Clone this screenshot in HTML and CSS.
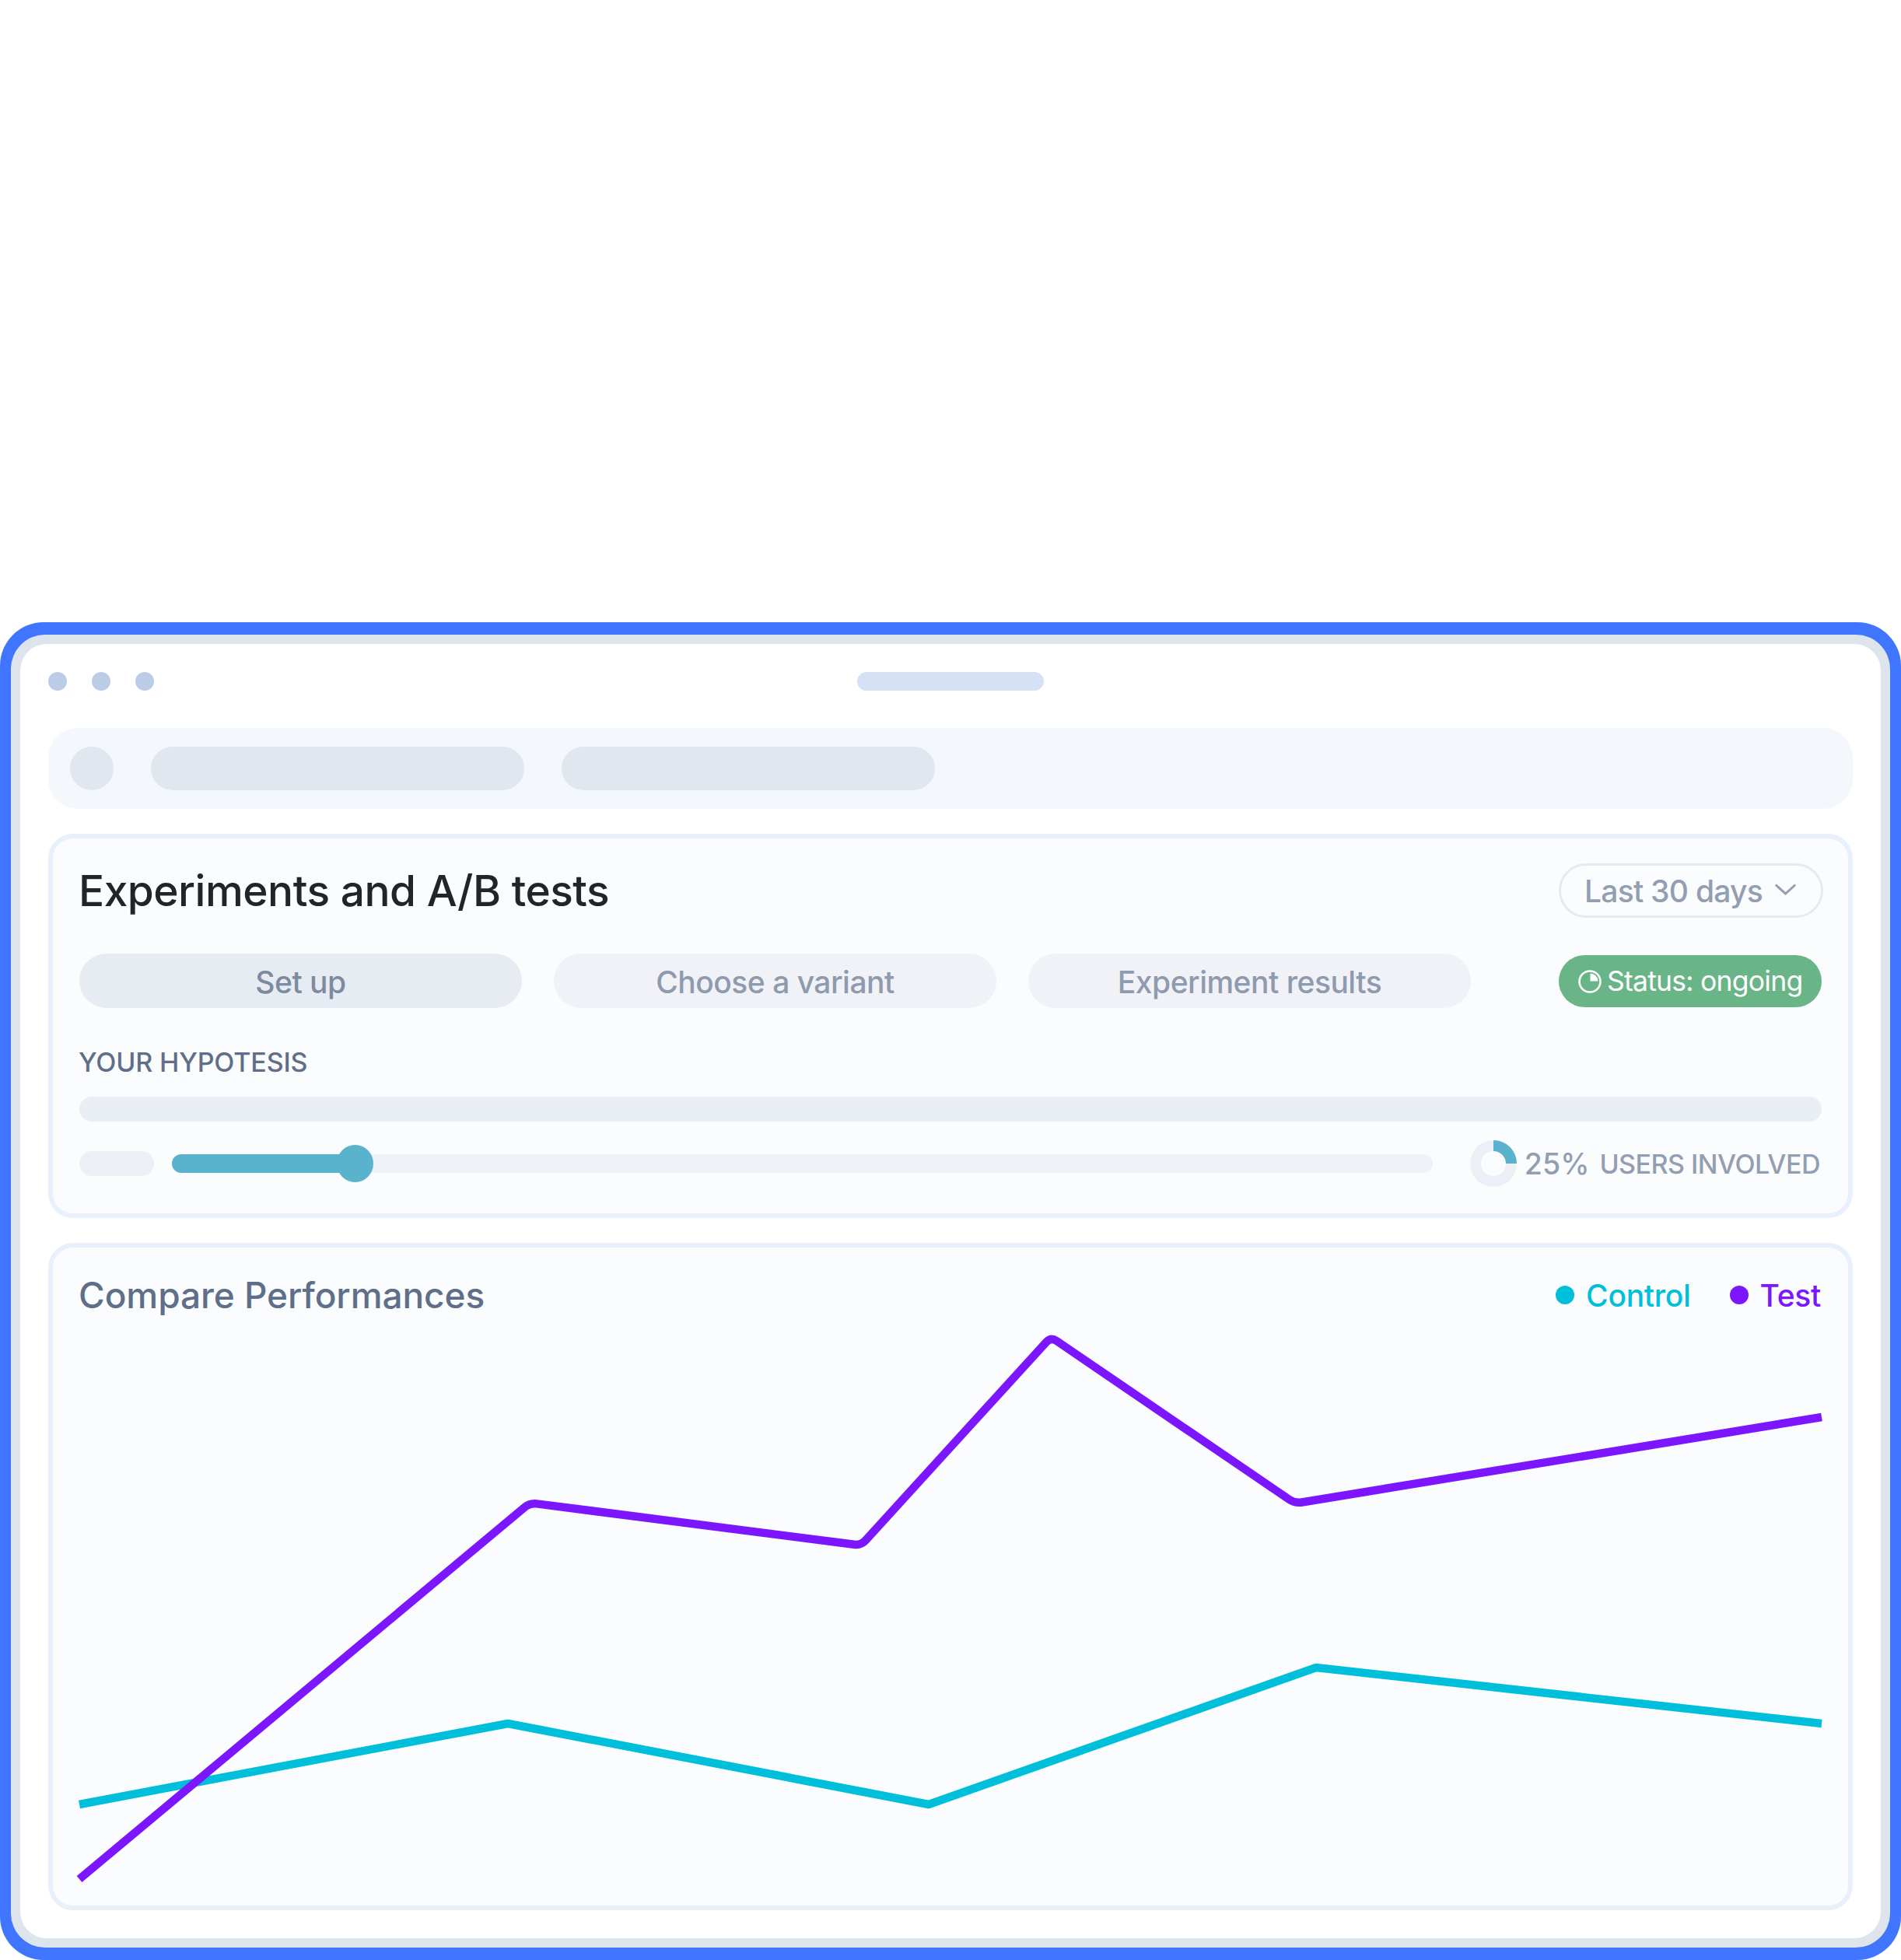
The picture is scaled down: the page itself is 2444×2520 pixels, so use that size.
FILE: index.html
```html
<!DOCTYPE html>
<html lang="en">
<head>
<meta charset="utf-8">
<title>Experiments and A/B tests</title>
<link rel="stylesheet" href="styles.css">
</head>
<body>
<div class="frame">
  <div class="frame-inner">
    <div class="window">
      <div class="titlebar">
        <div class="dots"><span class="dot"></span><span class="dot"></span><span class="dot"></span></div>
        <span class="address"></span>
      </div>
      <div class="nav">
        <span class="nav-circle"></span>
        <span class="nav-pill"></span>
        <span class="nav-pill"></span>
      </div>
      <section class="card card-experiment">
        <div class="head">
          <h1 class="title">Experiments and A/B tests</h1>
          <div class="range">
            <span>Last 30 days</span>
            <svg class="chevron" viewBox="0 0 27 15" width="27" height="15"><polyline points="0.8,1.5 13.5,13 26.2,1.5"/></svg>
          </div>
        </div>
        <div class="tabs">
          <div class="tab tab-active">Set up</div>
          <div class="tab">Choose a variant</div>
          <div class="tab">Experiment results</div>
          <div class="status">
            <svg class="status-icon" viewBox="0 0 30 30" width="30" height="30"><circle cx="15" cy="15" r="13.5" class="status-ring"/><path d="M15.5 4.5A10.5 10.5 0 0 1 25.5 14.5H15.5Z" class="status-wedge"/></svg>
            <span>Status: ongoing</span>
          </div>
        </div>
        <div class="label">YOUR HYPOTESIS</div>
        <div class="bar"></div>
        <div class="row">
          <span class="mini"></span>
          <div class="slider"><div class="slider-fill"><span class="thumb"></span></div></div>
          <svg class="donut" viewBox="0 0 60 60" width="60" height="60"><circle cx="30" cy="30" r="23" class="donut-track"/><path d="M30 7A23 23 0 0 1 53 30" class="donut-value"/></svg>
          <span class="pct">25%</span>
          <span class="users">USERS INVOLVED</span>
        </div>
      </section>
      <section class="card card-chart">
        <div class="head-chart">
          <h2 class="subtitle">Compare Performances</h2>
          <div class="legend">
            <span class="legend-item legend-control"><i class="legend-dot"></i>Control</span>
            <span class="legend-item legend-test"><i class="legend-dot"></i>Test</span>
          </div>
        </div>
        <svg class="chart" viewBox="102 1700 2240 730" width="2240" height="730">
          <path class="line-control" d="M102 2320L653 2216L1194 2320L1692 2144L2342 2216"/>
          <path class="line-test" d="M102 2416L674.1 1938.2Q681 1932.4 689.9 1933.4L1098.1 1985.8Q1107 1987 1113 1980.3L1345 1725.7Q1351 1719 1358.4 1724L1657.6 1928Q1665 1933 1673.9 1931.5L2342 1822"/>
        </svg>
      </section>
    </div>
  </div>
</div>
</body>
</html>
```
FILE: styles.css
```css
* { box-sizing: border-box; }
html, body { margin: 0; padding: 0; background: #fff; }
body { width: 2444px; height: 2520px; padding-top: 800px; font-family: Inter, "Liberation Sans", sans-serif; overflow: hidden; }

.frame { height: 1720px; background: #3f75ff; border-radius: 56px; padding: 16px 14px; }
.frame-inner { height: 100%; background: #dde4ec; border-radius: 44px; padding: 12px; }
.window { height: 100%; background: #fff; border-radius: 34px; padding: 36px; display: flex; flex-direction: column; }

.titlebar { position: relative; height: 24px; margin-bottom: 48px; display: flex; justify-content: center; }
.dots { position: absolute; left: 0; top: 0; display: flex; gap: 32px; }
.dot { width: 24px; height: 24px; border-radius: 50%; background: #bbcde6; }
.address { width: 240px; height: 24px; border-radius: 12px; background: #d5e1f5; }

.nav { height: 104px; background: #f4f7fb; border-radius: 38px; padding: 24px 28px; display: flex; gap: 48px; margin-bottom: 32px; }
.nav-circle { width: 56px; height: 56px; border-radius: 50%; background: #e1e7ef; }
.nav-pill { width: 480px; height: 56px; border-radius: 28px; background: #e1e7ef; }

.card { background: #fbfcfe; border: 6px solid #e8f0fb; border-radius: 32px; padding: 0 34px; }
.card-experiment { height: 494px; padding-top: 32px; margin-bottom: 32px; }
.card-chart { height: 858px; padding-top: 34px; }

.head { display: flex; justify-content: space-between; align-items: center; height: 70px; }
.title { margin: 0 0 0 -1px; font-size: 55px; font-weight: 500; letter-spacing: -0.5px; color: #222426; line-height: 70px; }
.range { width: 340px; height: 70px; margin-right: -2px; border: 3px solid #e4eaf2; border-radius: 35px; display: flex; align-items: center; padding-left: 30px; gap: 16px; color: #929eb1; font-size: 39px; font-weight: 500; letter-spacing: -0.75px; }
.chevron { fill: none; stroke: #929eb1; stroke-width: 3; margin-top: -3px; }

.tabs { display: flex; gap: 41px; margin-top: 46px; height: 70px; }
.tab { width: 569px; height: 70px; padding-top: 2px; border-radius: 35px; background: #f0f2f7; color: #8e9aad; font-size: 39px; font-weight: 500; letter-spacing: -0.5px; display: flex; align-items: center; justify-content: center; }
.tab-active { background: #e7ebf2; color: #7d8ba1; }
.status { margin-left: auto; margin-top: 2px; width: 338px; height: 67px; border-radius: 33.5px; background: #6ab587; color: #fff; font-size: 35.5px; display: flex; align-items: center; padding-left: 25px; gap: 7px; letter-spacing: -0.75px; }
.status-ring { fill: none; stroke: #fff; stroke-width: 2.5; }
.status-wedge { fill: #fff; }

.label { margin: 50px 0 0 -1px; height: 40px; line-height: 40px; font-size: 34px; font-weight: 500; color: #5f6f89; letter-spacing: -0.15px; }
.bar { margin-top: 24px; height: 32px; border-radius: 16px; background: #e9edf4; }

.row { margin-top: 24px; height: 60px; display: flex; align-items: center; }
.mini { width: 96px; height: 32px; border-radius: 16px; background: #eceff5; margin-right: 23px; }
.slider { flex: 1; height: 24px; border-radius: 12px; background: #f0f2f7; margin-right: 48px; }
.slider-fill { position: relative; width: 235px; height: 24px; border-radius: 12px 0 0 12px; background: #5bb2cd; }
.thumb { position: absolute; right: -24px; top: -12px; width: 47px; height: 48px; border-radius: 50%; background: #5bb2cd; }
.donut { margin-right: 10px; fill: none; }
.donut-track { fill: none; stroke: #eceff5; stroke-width: 14; }
.donut-value { fill: none; stroke: #5bb2cd; stroke-width: 14; }
.pct { font-size: 37.5px; font-weight: 500; color: #929eb1; margin-right: 13px; }
.users { margin-right: 2px; font-size: 34px; font-weight: 500; color: #929eb1; letter-spacing: -0.5px; }

.head-chart { display: flex; justify-content: space-between; align-items: center; height: 54px; }
.subtitle { margin: 0 0 0 -1px; font-size: 46px; font-weight: 500; color: #5f6f89; letter-spacing: -0.08px; }
.legend { display: flex; gap: 50px; margin-right: 1px; }
.legend-item { display: flex; align-items: center; gap: 15px; font-size: 39px; font-weight: 500; letter-spacing: -0.3px; }
.legend-dot { width: 24px; height: 24px; border-radius: 50%; background: currentColor; }
.legend-control { color: #00bfda; }
.legend-test { color: #7b16ff; }

.chart { display: block; margin-top: 8px; overflow: visible; }
.line-control, .line-test { fill: none; stroke-width: 10.5; stroke-linejoin: round; }
.line-control { stroke: #00bfda; }
.line-test { stroke: #7b16ff; }
```
